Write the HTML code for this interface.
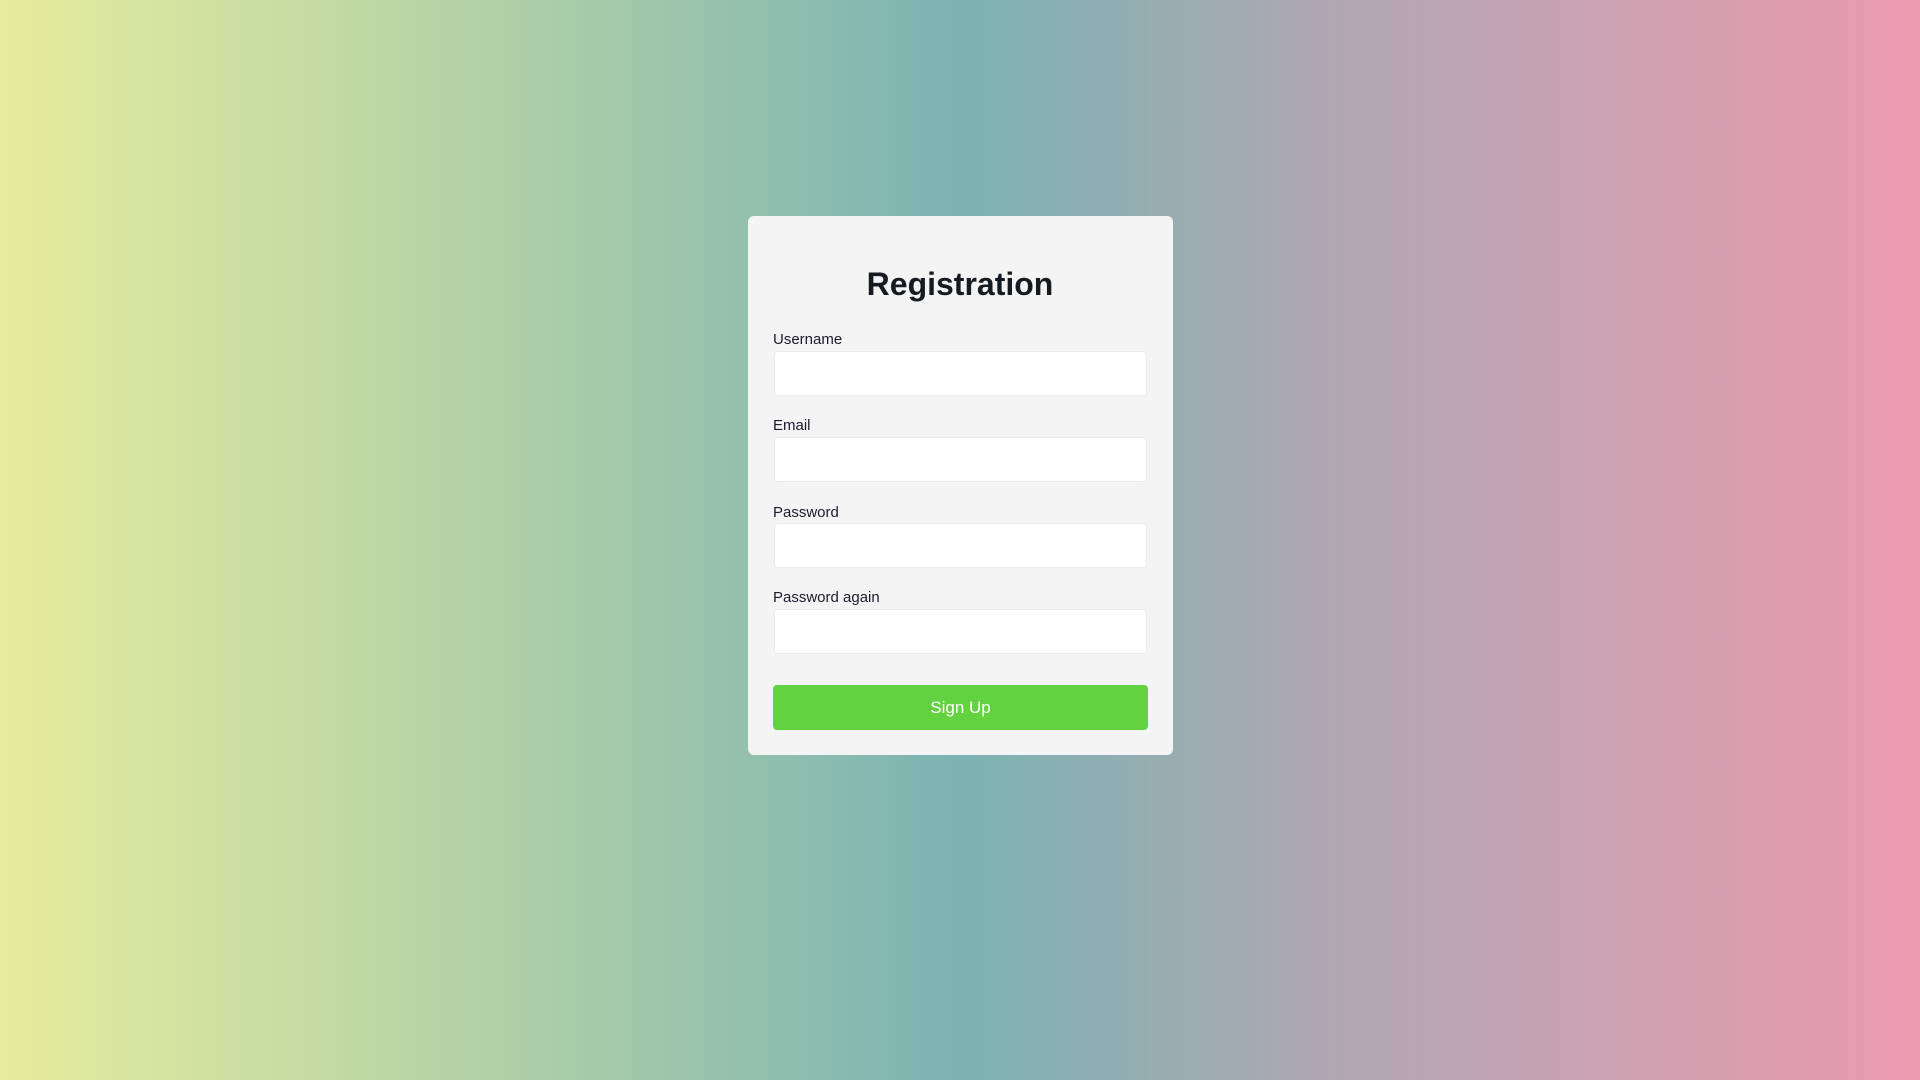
<!DOCTYPE html>
<html><head><meta charset="utf-8"><style>
html,body{margin:0;height:100%;}
body{width:1920px;height:1080px;background:linear-gradient(90deg,#e6ed9c 0%,#b2d1a6 25%,#7bb3b2 50%,#b1a7b3 70%,#eb9aae 100%);font-family:"Liberation Sans",sans-serif;position:relative;overflow:hidden;}
.card{position:absolute;left:748px;top:216px;width:425px;height:539px;background:#f4f4f4;border-radius:6px;}
h1{position:absolute;left:0;width:100%;top:266px;margin:0;text-align:center;font-size:32px;font-weight:bold;color:#161b22;}
.l{position:absolute;left:773px;font-size:15px;color:#1b1b2e;}
.i{position:absolute;left:774px;width:373px;height:45px;background:#fff;border:1px solid #ebebeb;border-radius:4px;box-sizing:border-box;}
.b{position:absolute;left:773px;top:685px;width:375px;height:45px;background:#62d241;border-radius:4px;color:#fff;font-size:17px;text-align:center;line-height:45px;}
</style></head><body>
<div class="card"></div>
<h1>Registration</h1>
<div class="l" style="top:331px">Username</div><div class="i" style="top:351px"></div>
<div class="l" style="top:417px">Email</div><div class="i" style="top:437px"></div>
<div class="l" style="top:504px">Password</div><div class="i" style="top:523px"></div>
<div class="l" style="top:589px">Password again</div><div class="i" style="top:609px"></div>
<div class="b">Sign Up</div>
</body></html>
